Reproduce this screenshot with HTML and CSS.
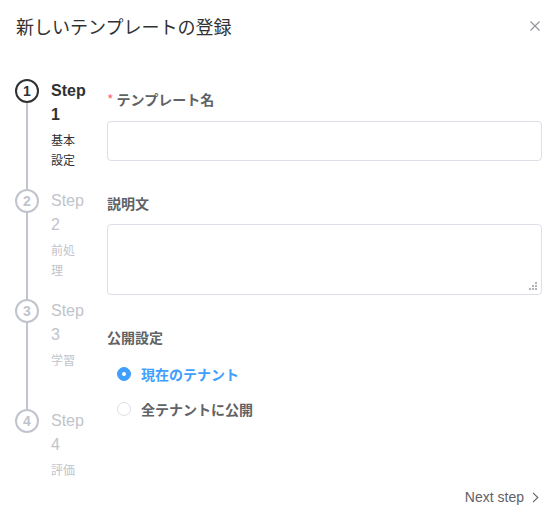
FILE: index.html
```html
<!DOCTYPE html>
<html lang="ja">
<head>
<meta charset="utf-8">
<link rel="stylesheet" href="styles.css">
</head>
<body>
<div class="dialog">
  <div class="header">
    <span class="title">新しいテンプレートの登録</span>
    <svg class="close" width="10" height="10" viewBox="0 0 10 10"><path d="M0.5 0.5L9.5 9.5M9.5 0.5L0.5 9.5" stroke="#909399" stroke-width="1.1" fill="none"/></svg>
  </div>
  <div class="body">
    <div class="steps">
      <div class="step process">
        <div class="head"><div class="line"></div><div class="icon">1</div></div>
        <div class="main"><div class="step-title">Step 1</div><div class="desc">基本設定</div></div>
      </div>
      <div class="step wait">
        <div class="head"><div class="line"></div><div class="icon">2</div></div>
        <div class="main"><div class="step-title">Step 2</div><div class="desc">前処理</div></div>
      </div>
      <div class="step wait">
        <div class="head"><div class="line"></div><div class="icon">3</div></div>
        <div class="main"><div class="step-title">Step 3</div><div class="desc">学習</div></div>
      </div>
      <div class="step wait last">
        <div class="head"><div class="icon">4</div></div>
        <div class="main"><div class="step-title">Step 4</div><div class="desc">評価</div></div>
      </div>
    </div>
    <div class="form">
      <div class="item">
        <div class="label"><span class="req">*</span>テンプレート名</div>
        <div class="input"></div>
      </div>
      <div class="item">
        <div class="label">説明文</div>
        <div class="textarea">
          <svg class="grip" width="9" height="9" viewBox="0 0 9 9" fill="#b4b4b4"><rect x="6" y="0" width="2" height="2"/><rect x="3" y="3" width="2" height="2"/><rect x="6" y="3" width="2" height="2"/><rect x="0" y="6" width="2" height="2"/><rect x="3" y="6" width="2" height="2"/><rect x="6" y="6" width="2" height="2"/></svg>
        </div>
      </div>
      <div class="item">
        <div class="label">公開設定</div>
        <div class="radios">
          <div class="radio checked"><span class="dot"></span><span class="rlabel">現在のテナント</span></div>
          <div class="radio"><span class="dot"></span><span class="rlabel">全テナントに公開</span></div>
        </div>
      </div>
    </div>
  </div>
  <div class="footer">
    <span class="next">Next step</span>
    <svg class="chev" width="7" height="11" viewBox="0 0 7 11"><path d="M1 0.8L5.8 5.5L1 10.2" stroke="#606266" stroke-width="1.1" fill="none"/></svg>
  </div>
</div>
</body>
</html>
```

FILE: styles.css
```css
* { box-sizing: border-box; }
html, body { margin: 0; padding: 0; background: #fff; }
body {
  font-family: "Liberation Sans", "Noto Sans CJK JP", sans-serif;
  color: #606266;
  width: 555px;
  height: 522px;
  overflow: hidden;
}
.dialog { width: 555px; }
.header {
  display: flex;
  justify-content: space-between;
  align-items: flex-start;
  padding: 14px 15px 0 16px;
  height: 79px;
}
.title {
  font-family: "Noto Sans CJK JP", sans-serif;
  font-size: 18px;
  line-height: 24px;
  color: #303133;
}
.close { margin-top: 7px; }
.body {
  display: flex;
  padding-left: 15px;
  padding-right: 13px;
  gap: 20px;
}
.steps { width: 72px; display: flex; flex-direction: column; }
.step { display: flex; height: 110px; }
.step.last { height: auto; }
.head { position: relative; width: 24px; flex: 0 0 24px; }
.line {
  position: absolute;
  left: 11px;
  top: 0;
  bottom: 0;
  width: 2px;
  background: #c0c4cc;
}
.icon {
  position: relative;
  z-index: 1;
  width: 24px;
  height: 24px;
  border: 2px solid #c0c4cc;
  border-radius: 50%;
  background: #fff;
  display: flex;
  align-items: center;
  justify-content: center;
  font-size: 14px;
  font-weight: 700;
  color: #c0c4cc;
}
.main { padding-left: 12px; width: 48px; }
.step-title {
  font-size: 16px;
  line-height: 24px;
  padding-bottom: 8px;
  color: #c0c4cc;
}
.desc {
  font-family: "Noto Sans CJK JP", sans-serif;
  font-size: 12px;
  line-height: 20px;
  margin-top: -5px;
  padding-right: 4px;
  color: #c0c4cc;
}
.process .icon { border-color: #303133; color: #303133; }
.process .step-title { color: #303133; font-weight: 700; }
.process .desc { color: #303133; }
.form { flex: 1; }
.item { margin-bottom: 22px; }
.item:last-child { margin-bottom: 0; }
.label {
  font-family: "Noto Sans CJK JP", sans-serif;
  font-size: 14px;
  line-height: 40px;
  padding-bottom: 2px;
  color: #606266;
  font-weight: 700;
}
.req { color: #f56c6c; margin-right: 3px; font-weight: 400; }
.input {
  height: 40px;
  border: 1px solid #dcdfe6;
  border-radius: 4px;
}
.textarea {
  position: relative;
  height: 71px;
  margin-top: -1px;
  border: 1px solid #dcdfe6;
  border-radius: 4px;
}
.grip { position: absolute; right: 3px; bottom: 3px; }
.radios {
  display: flex;
  flex-direction: column;
  gap: 5px;
  padding-left: 10px;
}
.radio {
  display: flex;
  align-items: center;
  height: 30px;
}
.dot {
  width: 14px;
  height: 14px;
  border: 1px solid #dcdfe6;
  border-radius: 50%;
  background: #fff;
  position: relative;
}
.radio.checked .dot { background: #409eff; border-color: #409eff; }
.radio.checked .dot::after {
  content: "";
  position: absolute;
  left: 50%;
  top: 50%;
  width: 4px;
  height: 4px;
  margin: -2px 0 0 -2px;
  border-radius: 50%;
  background: #fff;
}
.rlabel {
  font-family: "Noto Sans CJK JP", sans-serif;
  font-size: 14px;
  font-weight: 700;
  color: #606266;
  padding-left: 10px;
}
.radio.checked .rlabel { color: #409eff; }
.footer {
  display: flex;
  justify-content: flex-end;
  align-items: center;
  gap: 8px;
  padding-right: 16px;
  margin-top: 7px;
  height: 20px;
}
.next { font-size: 14px; color: #606266; }
```
